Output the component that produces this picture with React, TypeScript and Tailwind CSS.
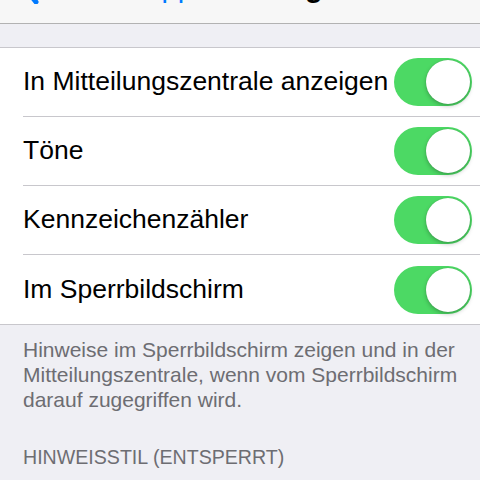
import React from "react";

const rows = [
  "In Mitteilungszentrale anzeigen",
  "Töne",
  "Kennzeichenzähler",
  "Im Sperrbildschirm",
];

function Toggle() {
  return (
    <div className="relative h-[48px] w-[78px] shrink-0 rounded-full bg-[#4cd964]">
      <div className="absolute right-[2px] top-[2px] h-[44px] w-[44px] rounded-full bg-white shadow-[0_2px_4px_rgba(0,0,0,0.25),0_0_1px_rgba(0,0,0,0.2)]" />
    </div>
  );
}

export default function App() {
  return (
    <div
      className="h-[480px] w-[480px] overflow-hidden bg-[#efeff4]"
      style={{ fontFamily: "'Liberation Sans', Arial, sans-serif" }}
    >
      <div className="h-[24px] overflow-hidden border-b border-[#b2b2b2] bg-[#f7f7f7]">
        <div className="-mt-[36px] flex h-[40px] items-end pl-[18px]">
          <svg width="22" height="40" viewBox="0 0 22 40" className="mr-[20px] shrink-0">
            <path d="M18 2 L4 20 L18 38" stroke="#007aff" strokeWidth="5" fill="none" strokeLinecap="round" strokeLinejoin="round" />
          </svg>
          <span className="whitespace-nowrap text-[29px] leading-[34px] text-[#007aff]">WhatsApp</span>
          <span className="ml-[-8px] whitespace-nowrap text-[29px] font-bold leading-[34px] text-black">
            Mitteilungen
          </span>
        </div>
      </div>
      <div className="h-[23px]" />
      <div className="border-y border-[#c8c7cc] bg-white">
        {rows.map((r, i) => (
          <div key={r} className="pl-[23px]">
            <div
              className={
                "flex h-[69px] items-center justify-between pr-[8px] " +
                (i < rows.length - 1 ? "border-b border-[#c8c7cc]" : "")
              }
            >
              <span className="text-[26.5px] text-black">{r}</span>
              <Toggle />
            </div>
          </div>
        ))}
      </div>
      <div className="pl-[23px] pr-[8px] pt-[12px] text-[21px] leading-[25px] text-[#6d6d72]">
        Hinweise im Sperrbildschirm zeigen und in der Mitteilungszentrale, wenn vom Sperrbildschirm darauf zugegriffen wird.
      </div>
      <div className="px-[23px] pt-[33px] text-[19.6px] leading-[25px] text-[#6d6d72]">
        HINWEISSTIL (ENTSPERRT)
      </div>
    </div>
  );
}
